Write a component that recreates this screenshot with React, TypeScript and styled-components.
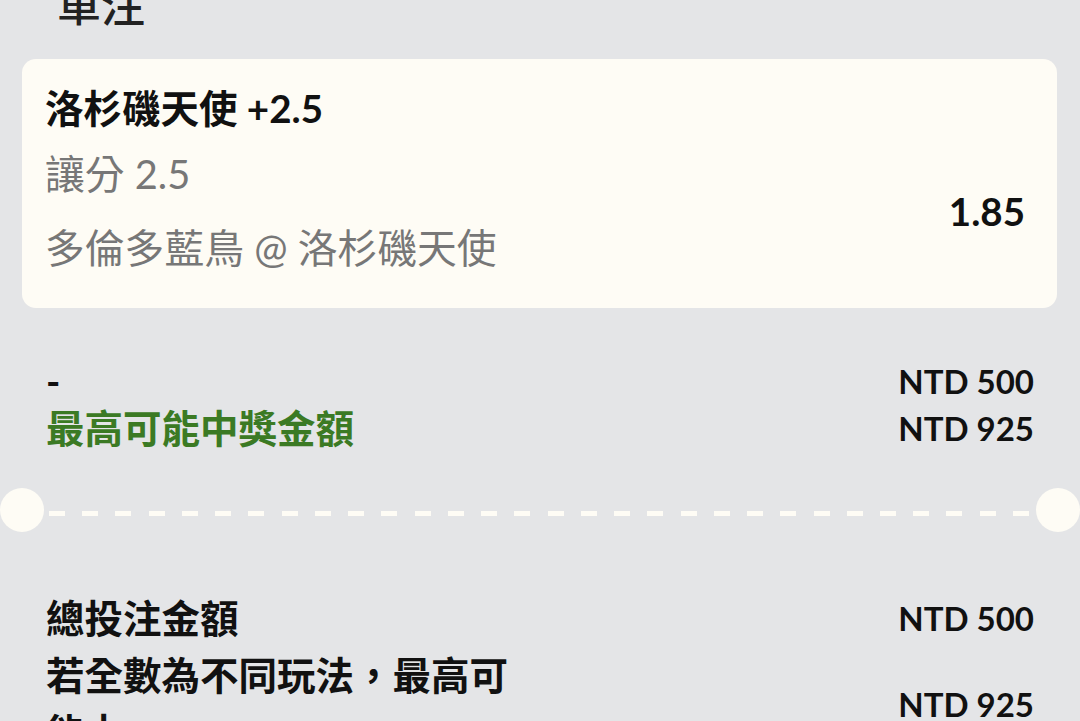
import React from 'react'
import styled, { createGlobalStyle } from 'styled-components'

const GlobalStyle = createGlobalStyle`
  html, body {
    margin: 0;
    padding: 0;
    background: #e4e5e7;
  }
  body {
    font-family: Lato, "Noto Sans CJK TC", sans-serif;
    color: #111;
    overflow: hidden;
  }
`

const Sheet = styled.div`
  width: 1080px;
  height: 721px;
  overflow: hidden;
  background: #e4e5e7;
`

const SheetTitle = styled.div`
  margin-top: -25px;
  padding-left: 57px;
  font-size: 44px;
  line-height: 60px;
  font-weight: 500;
  color: #222;
`

const BetCard = styled.div`
  margin: 24px 23px 0 22px;
  padding: 20px 32px 31px 23px;
  background: #fefcf5;
  border-radius: 14px;
`

const Selection = styled.div`
  font-size: 38.5px;
  line-height: 58px;
  font-weight: 700;
  color: #111;
`

const CardBody = styled.div`
  display: flex;
  align-items: center;
  justify-content: space-between;
  margin-top: 8px;
`

const Info = styled.div`
  display: flex;
  flex-direction: column;
  gap: 16px;
`

const InfoLine = styled.div`
  font-size: 39.8px;
  line-height: 58px;
  color: #777;
`

const Odds = styled.div`
  font-size: 38.5px;
  line-height: 58px;
  font-weight: 700;
  color: #111;
`

const Summary = styled.div<{ $top: number; $lh: number }>`
  margin-top: ${p => p.$top}px;
  padding: 0 46px;
  display: flex;
  flex-direction: column;

  & > div {
    line-height: ${p => p.$lh}px;
  }
`

const Row = styled.div`
  display: flex;
  align-items: center;
  justify-content: space-between;
`

const Label = styled.div<{ $green?: boolean }>`
  max-width: 490px;
  font-size: 38.5px;
  font-weight: 700;
  color: ${p => (p.$green ? '#3b7a24' : '#111')};
`

const Amount = styled.div`
  font-size: 33px;
  font-weight: 700;
  color: #111;
  white-space: nowrap;
`

const Divider = styled.div`
  margin-top: 36px;
  height: 44px;
  display: flex;
  align-items: center;
`

const Notch = styled.div`
  flex: 0 0 44px;
  height: 44px;
  border-radius: 50%;
  background: #fefcf5;
`

const Dashes = styled.div`
  flex: 1;
  height: 5px;
  margin: 6px 7px 0 5px;
  background: repeating-linear-gradient(
    to right,
    #fefcf5 0 16px,
    transparent 16px 33.24px
  );
`

export default function App() {
  return (
    <Sheet>
      <GlobalStyle />
      <SheetTitle>單注</SheetTitle>
      <BetCard>
        <Selection>洛杉磯天使 +2.5</Selection>
        <CardBody>
          <Info>
            <InfoLine>讓分 2.5</InfoLine>
            <InfoLine>多倫多藍鳥 @ 洛杉磯天使</InfoLine>
          </Info>
          <Odds>1.85</Odds>
        </CardBody>
      </BetCard>

      <Summary $top={50} $lh={47}>
        <Row>
          <Label>-</Label>
          <Amount>NTD 500</Amount>
        </Row>
        <Row>
          <Label $green>最高可能中獎金額</Label>
          <Amount>NTD 925</Amount>
        </Row>
      </Summary>

      <Divider>
        <Notch />
        <Dashes />
        <Notch />
      </Divider>

      <Summary $top={58} $lh={57}>
        <Row>
          <Label>總投注金額</Label>
          <Amount>NTD 500</Amount>
        </Row>
        <Row>
          <Label>若全數為不同玩法，最高可能中</Label>
          <Amount>NTD 925</Amount>
        </Row>
      </Summary>
    </Sheet>
  )
}
